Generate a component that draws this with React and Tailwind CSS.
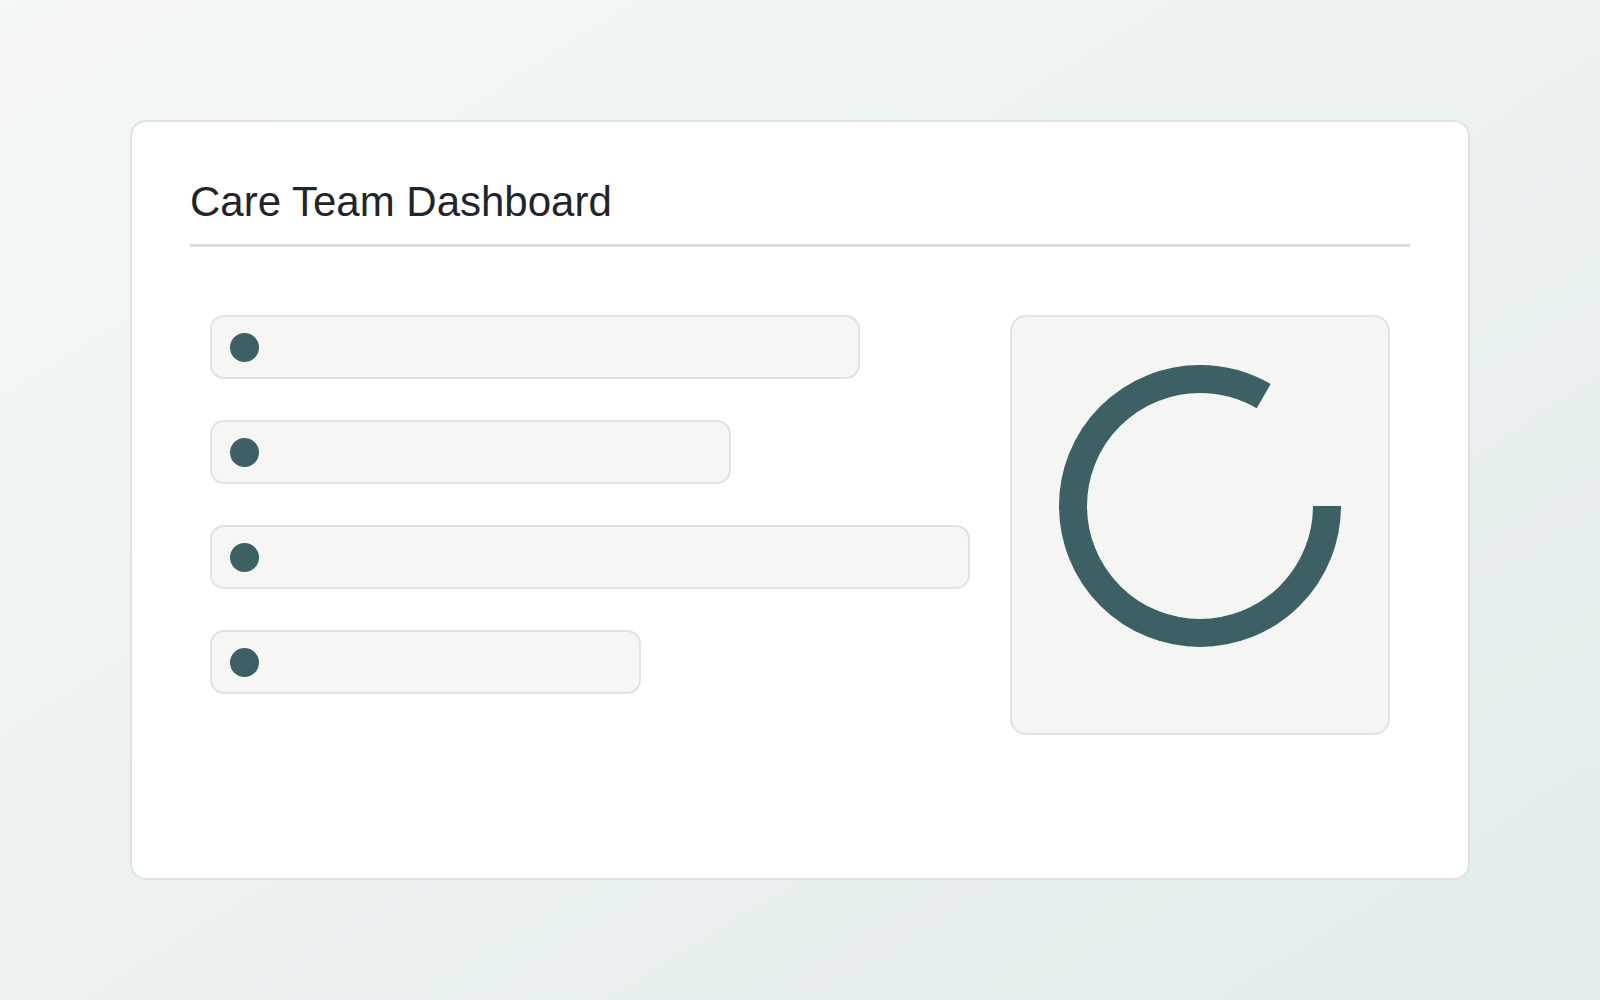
const rows = [
  { id: 'r1', width: 'w-[650px]' },
  { id: 'r2', width: 'w-[521px]' },
  { id: 'r3', width: 'w-[760px]' },
  { id: 'r4', width: 'w-[431px]' }
];

function StatusRing() {
  // 300° arc, starts at 3 o'clock and runs clockwise
  const r = 127;
  const circumference = 2 * Math.PI * r;
  return (
    <svg width="282" height="282" viewBox="0 0 282 282" fill="none">
      <circle
        cx="141"
        cy="141"
        r={r}
        stroke="#3d6064"
        strokeWidth="28"
        strokeDasharray={`${(circumference * 300) / 360} ${circumference}`}
      />
    </svg>
  );
}

export default function App() {
  return (
    <div className="flex h-screen w-full items-center justify-center bg-gradient-to-br from-[#f4f7f6] to-[#e4eced] font-['Liberation_Sans',Arial,sans-serif]">
      <div className="flex h-[760px] w-[1340px] flex-col rounded-2xl border-2 border-[#dfe1e1] bg-white px-[58px] pt-[59px]">
        <header className="border-b-[3px] border-[#dde0df] pb-[21px]">
          <h1 className="text-[42px] leading-none font-normal text-[#1f2529]">Care Team Dashboard</h1>
        </header>

        <div className="flex gap-[40px] px-[20px] pt-[68px]">
          <div className="flex flex-1 flex-col gap-[41px]">
            {rows.map((row) => (
              <div
                key={row.id}
                className={`flex h-16 items-center rounded-[14px] border-2 border-[#e2e2e0] bg-[#f6f6f4] pl-[18px] ${row.width}`}
              >
                <span className="block h-[29px] w-[29px] rounded-full bg-[#3d6064]" />
              </div>
            ))}
          </div>

          <div className="flex h-[420px] w-[380px] shrink-0 justify-center rounded-2xl border-2 border-[#e2e2e0] bg-[#f5f5f3] pt-[48px]">
            <StatusRing />
          </div>
        </div>
      </div>
    </div>
  );
}
